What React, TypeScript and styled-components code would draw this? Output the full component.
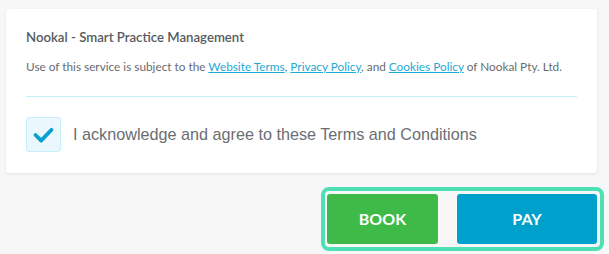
import * as React from 'react';
import styled, { createGlobalStyle } from 'styled-components';

const GlobalStyle = createGlobalStyle`
  html, body {
    margin: 0;
    padding: 0;
    background: #f7f7f7;
  }
  body {
    font-family: Lato, "Noto Sans", sans-serif;
  }
`;

function CheckIcon() {
  return (
    <svg width="35" height="35" viewBox="0 0 35 35" aria-hidden="true">
      <path
        d="M9 18 L15 24 L26 12.5"
        fill="none"
        stroke="#0a9fcf"
        strokeWidth="4"
        strokeLinecap="round"
        strokeLinejoin="round"
      />
    </svg>
  );
}

export default function App() {
  const [agreed, setAgreed] = React.useState(true);

  return (
    <Page>
      <GlobalStyle />
      <Card>
        <Title>Nookal - Smart Practice Management</Title>
        <Notice>
          Use of this service is subject to the <Link href="#">Website Terms</Link>,{' '}
          <Link href="#">Privacy Policy</Link>, and <Link href="#">Cookies Policy</Link> of
          Nookal Pty. Ltd.
        </Notice>
        <Divider />
        <AgreeRow onClick={() => setAgreed(!agreed)}>
          <Box>{agreed && <CheckIcon />}</Box>
          <AgreeText>I acknowledge and agree to these Terms and Conditions</AgreeText>
        </AgreeRow>
      </Card>
      <Actions>
        <ButtonGroup>
          <ActionButton $color="#3eba48" $width={111}>BOOK</ActionButton>
          <ActionButton $color="#00a0cc" $width={140}>PAY</ActionButton>
        </ButtonGroup>
      </Actions>
    </Page>
  );
}

const Page = styled.div`
  padding: 9px 5px 0 6px;
`;

const Card = styled.div`
  margin-right: 7px;
  padding: 20px 20px 21px;
  background: #fff;
  border-radius: 3px;
  box-shadow: 0 1px 3px rgba(0, 0, 0, 0.09);
`;

const Title = styled.div`
  font-size: 13.2px;
  font-weight: 600;
  color: #555b60;
  line-height: 1.25;
`;

const Notice = styled.div`
  margin-top: 14px;
  font-size: 11.8px;
  color: #676c70;
  line-height: 1.2;
  white-space: nowrap;
`;

const Link = styled.a`
  color: #1eaad6;
  text-decoration: underline;
  text-underline-offset: 1px;
`;

const Divider = styled.div`
  height: 1px;
  margin-top: 22px;
  background: #c6effc;
`;

const AgreeRow = styled.label`
  display: flex;
  align-items: center;
  gap: 12px;
  margin-top: 20px;
  cursor: pointer;
`;

const Box = styled.span`
  width: 33px;
  height: 33px;
  box-sizing: content-box;
  border: 1px solid #c6eefb;
  border-radius: 3px;
  background: #eaf8fd;
  display: flex;
  align-items: center;
  justify-content: center;
  flex-shrink: 0;
`;

const AgreeText = styled.span`
  font-family: "Liberation Sans", Arial, sans-serif;
  font-size: 16.2px;
  color: #6a6e72;
`;

const Actions = styled.div`
  display: flex;
  justify-content: flex-end;
  margin-top: 14px;
`;

const ButtonGroup = styled.div`
  display: flex;
  gap: 19px;
  padding: 3px 3px 3px 2px;
  border: 4px solid #4de0b4;
  border-radius: 8px;
`;

const ActionButton = styled.button<{ $color: string; $width: number }>`
  width: ${(p) => p.$width}px;
  height: 50px;
  border: none;
  border-radius: 3px;
  background: ${(p) => p.$color};
  color: #fff;
  font-family: Lato, "Noto Sans", sans-serif;
  font-size: 16px;
  font-weight: 700;
  cursor: pointer;
`;
